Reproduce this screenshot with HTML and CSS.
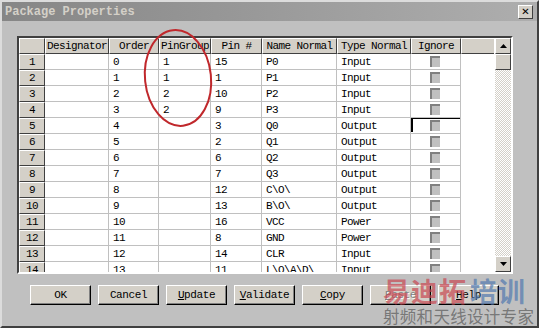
FILE: index.html
```html
<!DOCTYPE html>
<html>
<head>
    <title>Package Properties</title>
    <link rel="stylesheet" href="styles.css">
</head>
<body>
    <div class="window">
        <div class="titlebar">
            <span class="title">Package Properties</span>
            <span class="close">&#x2715;</span>
        </div>

        <div class="table-box">
            <div class="grid">
                <div class="hd"></div><div class="hd">Designator</div><div class="hd">Order</div><div class="hd">PinGroup</div><div class="hd">Pin #</div><div class="hd">Name Normal</div><div class="hd">Type Normal</div><div class="hd">Ignore</div><div class="hd blank"></div>

                <div class="rh">1</div><div class="c"></div><div class="c">0</div><div class="c">1</div><div class="c">15</div><div class="c">P0</div><div class="c">Input</div><div class="c chk"><i></i></div><div class="e"></div>
                <div class="rh">2</div><div class="c"></div><div class="c">1</div><div class="c">1</div><div class="c">1</div><div class="c">P1</div><div class="c">Input</div><div class="c chk"><i></i></div><div class="e"></div>
                <div class="rh">3</div><div class="c"></div><div class="c">2</div><div class="c">2</div><div class="c">10</div><div class="c">P2</div><div class="c">Input</div><div class="c chk"><i></i></div><div class="e"></div>
                <div class="rh">4</div><div class="c"></div><div class="c">3</div><div class="c">2</div><div class="c">9</div><div class="c">P3</div><div class="c">Input</div><div class="c chk"><i></i></div><div class="e"></div>
                <div class="rh">5</div><div class="c"></div><div class="c">4</div><div class="c"></div><div class="c">3</div><div class="c">Q0</div><div class="c">Output</div><div class="c chk focus"><i></i></div><div class="e"></div>
                <div class="rh">6</div><div class="c"></div><div class="c">5</div><div class="c"></div><div class="c">2</div><div class="c">Q1</div><div class="c">Output</div><div class="c chk"><i></i></div><div class="e"></div>
                <div class="rh">7</div><div class="c"></div><div class="c">6</div><div class="c"></div><div class="c">6</div><div class="c">Q2</div><div class="c">Output</div><div class="c chk"><i></i></div><div class="e"></div>
                <div class="rh">8</div><div class="c"></div><div class="c">7</div><div class="c"></div><div class="c">7</div><div class="c">Q3</div><div class="c">Output</div><div class="c chk"><i></i></div><div class="e"></div>
                <div class="rh">9</div><div class="c"></div><div class="c">8</div><div class="c"></div><div class="c">12</div><div class="c">C\O\</div><div class="c">Output</div><div class="c chk"><i></i></div><div class="e"></div>
                <div class="rh">10</div><div class="c"></div><div class="c">9</div><div class="c"></div><div class="c">13</div><div class="c">B\O\</div><div class="c">Output</div><div class="c chk"><i></i></div><div class="e"></div>
                <div class="rh">11</div><div class="c"></div><div class="c">10</div><div class="c"></div><div class="c">16</div><div class="c">VCC</div><div class="c">Power</div><div class="c chk"><i></i></div><div class="e"></div>
                <div class="rh">12</div><div class="c"></div><div class="c">11</div><div class="c"></div><div class="c">8</div><div class="c">GND</div><div class="c">Power</div><div class="c chk"><i></i></div><div class="e"></div>
                <div class="rh">13</div><div class="c"></div><div class="c">12</div><div class="c"></div><div class="c">14</div><div class="c">CLR</div><div class="c">Input</div><div class="c chk"><i></i></div><div class="e"></div>
                <div class="rh">14</div><div class="c"></div><div class="c">13</div><div class="c"></div><div class="c">11</div><div class="c">L\O\A\D\</div><div class="c">Input</div><div class="c chk"><i></i></div><div class="e"></div>
            </div>
            <div class="scrollbar">
                <div class="sb-btn"><svg width="7" height="4"><polygon points="0,4 7,4 3.5,0" fill="#000"/></svg></div>
                <div class="sb-btn thumb"></div>
                <div class="sb-track"></div>
                <div class="sb-btn"><svg width="7" height="4"><polygon points="0,0 7,0 3.5,4" fill="#000"/></svg></div>
            </div>
        </div>

        <div class="buttons">
            <button>OK</button>
            <button>Cancel</button>
            <button><u>U</u>pdate</button>
            <button><u>V</u>alidate</button>
            <button><u>C</u>opy</button>
            <button class="disabled"><u>P</u>aste</button>
            <button><u>H</u>elp</button>
        </div>

        <svg class="mark-circle" width="90" height="110" viewBox="0 0 90 110">
            <ellipse cx="45" cy="55" rx="33" ry="48" transform="rotate(-6 45 55)" fill="none" stroke="#c0282c" stroke-width="2"/>
        </svg>

        <div class="watermark">
            <div class="wm-top"><span class="red">易迪拓</span><span class="blue">培训</span></div>
            <div class="wm-sub">射频和天线设计专家</div>
        </div>
    </div>
</body>
</html>
```

FILE: styles.css
```css
body { margin: 0; font-family: "Liberation Mono", monospace; }
.window { position: relative; width: 539px; height: 328px; box-sizing: border-box; background: #c0c0c0; border: 2px solid; border-color: #dcdcdc #404040 #404040 #dcdcdc; overflow: hidden; }

.titlebar { height: 19px; display: flex; align-items: center; justify-content: space-between; padding: 0 4px 0 3px; background: linear-gradient(90deg, #868686, #aeaeae); }
.title { color: #d4d0c8; font-weight: bold; font-size: 12px; letter-spacing: 0; }
.close { width: 15px; height: 14px; box-sizing: border-box; background: #d4d0c8; border: 1px solid; border-color: #fff #404040 #404040 #fff; font-size: 10px; font-weight: bold; line-height: 12px; text-align: center; font-family: "DejaVu Sans", sans-serif; }

.table-box { display: flex; margin: 15px 0 0 15px; width: 496px; height: 238px; box-sizing: border-box; border: 2px solid; border-color: #404040 #fff #fff #404040; background: #fff; }
.grid { flex: 1; height: 234px; overflow: hidden; display: grid; grid-template-columns: 26px 64px 50px 52px 51px 75px 74px 50px 33px; grid-auto-rows: 16px; font-size: 11px; letter-spacing: -0.6px; }
.grid > div { box-sizing: border-box; line-height: 16px; white-space: nowrap; overflow: hidden; }
.hd, .rh { background: #d4d0c8; border: 1px solid; border-color: #fff #404040 #404040 #fff; text-align: center; line-height: 14px !important; }
.hd.blank { border-right: none; }
.c { border-right: 1px solid #c0c0c0; border-bottom: 1px solid #c0c0c0; padding-left: 4px; }
.e { background: #fff; }
.chk { position: relative; }
.chk i { position: absolute; left: 19px; top: 2px; width: 10px; height: 11px; box-sizing: border-box; background: #c0c0c0; border-top: 2px solid #808080; border-left: 2px solid #808080; }
.focus::before { content: ""; position: absolute; left: 0; top: 0; width: 50px; height: 14px; box-sizing: border-box; border-top: 1px solid #000; border-left: 2px solid #000; border-right: 1px solid #000; }

.scrollbar { width: 16px; display: flex; flex-direction: column; }
.sb-btn { height: 16px; box-sizing: border-box; background: #d4d0c8; border: 1px solid; border-color: #fff #404040 #404040 #fff; display: flex; align-items: center; justify-content: center; }
.sb-track { flex: 1; background: repeating-conic-gradient(#fff 0 25%, #d4d0c8 0 50%) 0 0 / 2px 2px; }

.buttons { display: flex; gap: 7px; margin: 11px 0 0 28px; }
button { width: 61px; height: 20px; padding: 0; background: #d4d0c8; border: 1px solid; border-color: #fff #000 #000 #fff; box-shadow: inset -1px -1px 0 #808080; font-family: "Liberation Mono", monospace; font-size: 11px; letter-spacing: -0.4px; color: #000; }
button.disabled { color: #808080; text-shadow: 1px 1px 0 #fff; }

.mark-circle { position: absolute; left: 131px; top: 21px; }

.watermark { position: absolute; left: 381px; top: 274px; font-family: "Noto Sans CJK SC", sans-serif; pointer-events: none; }
.wm-top { font-size: 27px; font-weight: bold; line-height: 30px; letter-spacing: 1px; }
.red { color: rgba(200, 70, 80, 0.7); }
.blue { color: rgba(80, 120, 175, 0.7); margin-left: 3px; }
.wm-sub { font-size: 16.5px; line-height: 20px; color: rgba(100, 100, 100, 0.8); letter-spacing: 0.3px; }
```
